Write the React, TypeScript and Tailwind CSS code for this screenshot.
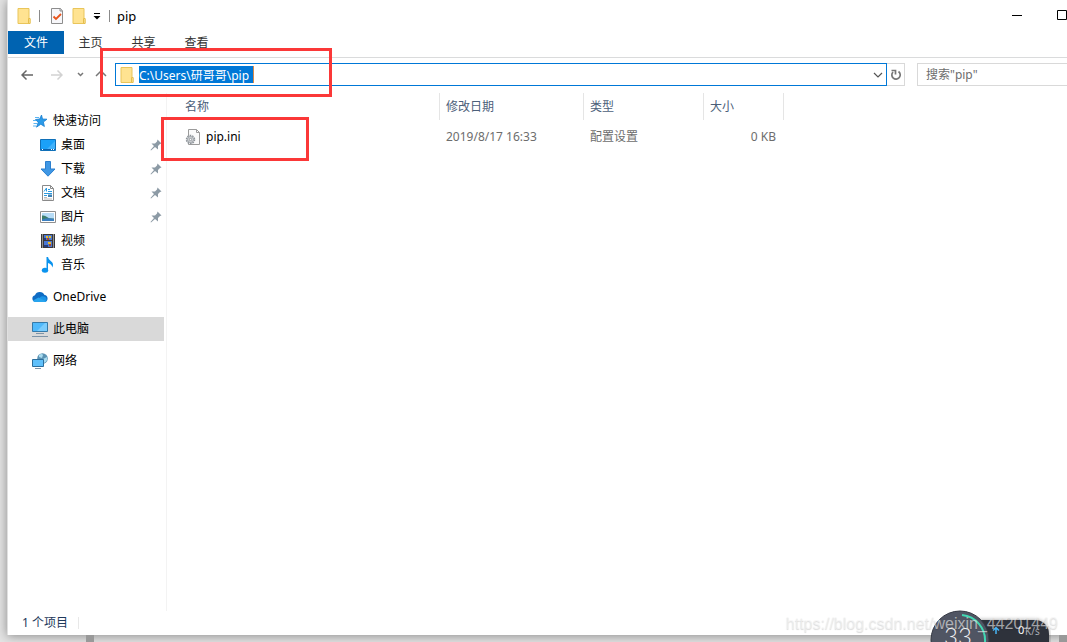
import React from 'react';

interface IconProps {
  className?: string;
}

const FolderIcon: React.FC<IconProps> = ({ className = 'w-4 h-4' }) => (
  <svg viewBox="0 0 16 16" className={className} aria-hidden="true">
    <path d="M2 .5h11v10h1v5H2z" fill="#ffe391" stroke="#e9c55a" />
    <path d="M12.500 15.500v-5h1.500v5z" fill="#fff0b5" stroke="#e6be4c" />
  </svg>
);

const PropertiesIcon = () => (
  <svg viewBox="0 0 16 16" className="w-4 h-4" aria-hidden="true">
    <path d="M2.500.5h9l2 2.500v12.500h-11z" fill="#f7f7fa" stroke="#8d8d8d" />
    <path d="M11 .5V3h2.500" fill="none" stroke="#8d8d8d" />
    <path d="M4.500 8.500l2.500 2.500 5-5" fill="none" stroke="#e8541c" strokeWidth="1.800" />
  </svg>
);

const StarIcon = () => (
  <svg viewBox="0 0 16 16" className="w-4 h-4" aria-hidden="true">
    <path
      d="M9.500 2l1 4 4.500.2-3.600 2.800 1 4.500-3.600-2.300-4.300 3 1.700-4.900L3.500 6.500l4.200-.5z"
      fill="#2a9ae8"
      stroke="#1a7fd0"
      strokeWidth=".8"
    />
    <path d="M3 4.500h4M1 7.500h3M1.500 10.500h3.500M1 13h3" stroke="#5ab4f2" />
  </svg>
);

const DesktopIcon = () => (
  <svg viewBox="0 0 16 16" className="w-4 h-4" aria-hidden="true">
    <path d="M.5 2.500h15v11H.5z" fill="#1ba1f8" stroke="#1070b8" />
    <path d="M7 12L15 4v8z" fill="#41b2fb" />
    <path d="M1 12.500h14" stroke="#0c62ad" />
    <path d="M2 12.500h1M11 12.500h1M13 12.500h1" stroke="#fff" />
  </svg>
);

const DownloadIcon = () => (
  <svg viewBox="0 0 16 16" className="w-4 h-4" aria-hidden="true">
    <path d="M5.500.5h5v7.500h4.500L8 15.200 1 8h4.500z" fill="#3f97e4" stroke="#2b7fce" />
  </svg>
);

const DocumentIcon = () => (
  <svg viewBox="0 0 16 16" className="w-4 h-4" aria-hidden="true">
    <path d="M2.500.5h8l3 3v12h-11z" fill="#fff" stroke="#8a8a8a" />
    <path d="M10.500.5v3h3" fill="none" stroke="#8a8a8a" />
    <path d="M4 6.500L6.500 3v3.500M8 4.500h2M8 6.500h4M4 8.500h8M4 10.500h3" fill="none" stroke="#2b9be0" />
    <path d="M8 9.500h4v2.500H8z" fill="#3c81b5" />
    <path d="M4 12.500h3M4 14h8" stroke="#aaa" strokeWidth=".8" />
  </svg>
);

const PictureIcon = () => (
  <svg viewBox="0 0 16 16" className="w-4 h-4" aria-hidden="true">
    <path d="M.5 2.500h15v11H.5z" fill="#fff" stroke="#8f8f8f" />
    <path d="M2 4h12v8H2z" fill="#b7dcf6" />
    <path d="M2 6.500q3-.5 5 1.500t7 1.500V12H2z" fill="#3c7d6b" />
    <path d="M2 10.500q6-2 12-.5v2H2z" fill="#3b7fc0" />
  </svg>
);

const VideoIcon = () => (
  <svg viewBox="0 0 16 16" className="w-4 h-4" aria-hidden="true">
    <path d="M1 1h14v14H1z" fill="#3a3838" />
    <path d="M2.500 1.500v13M13.500 1.500v13" stroke="#e8e8e8" strokeDasharray="1 1" />
    <path d="M4 2h8v5H4zM4 8h8v6H4z" fill="#4a78d4" />
    <path d="M6 3h2v2H6zM9 3h2v2H9zM8 9h3v2H8z" fill="#e8bd2a" />
    <path d="M7 5h2v2H7zM9 11h2v2H9z" fill="#a84630" />
    <path d="M4 5h2v2H4zM4 12h4v2H4z" fill="#243d7c" />
  </svg>
);

const MusicIcon = () => (
  <svg viewBox="0 0 16 16" className="w-4 h-4" aria-hidden="true">
    <ellipse cx="5" cy="13.300" rx="3.200" ry="2.500" fill="#0a93ee" />
    <path d="M6.500 0H8q.3 2.500 3 4.200 3.300 2.300 1.300 6.300-.3-3.500-4.300-4.500v7.500H6.500z" fill="#0a93ee" />
  </svg>
);

const CloudIcon = () => (
  <svg viewBox="0 0 16 16" className="w-4 h-4" aria-hidden="true">
    <path d="M3.500 13A3.400 3.400 0 013 6.300 5.200 5.200 0 0112.500 6 3.600 3.600 0 0113 13z" fill="#0f6cc4" />
    <path d="M3 13l6-5.500q2-.8 4 .2A3 3 0 0113 13z" fill="#1b94e6" />
    <path d="M1 11.500L6.500 8.500l8 4-1.500.5H3.500Q1.500 13 1 11.500z" fill="#28a4ee" />
  </svg>
);

const ComputerIcon = () => (
  <svg viewBox="0 0 16 16" className="w-4 h-4" aria-hidden="true">
    <path d="M.5 1.500h15v9H.5z" fill="#4fb9fb" stroke="#3579a8" />
    <path d="M5 10L13 2h2v8z" fill="#7accfd" />
    <path d="M4 12.500h8M0 15.500h16" stroke="#7d94a8" />
  </svg>
);

const NetworkIcon = () => (
  <svg viewBox="0 0 16 16" className="w-4 h-4" aria-hidden="true">
    <circle cx="10.500" cy="5.500" r="5.300" fill="#5b93b4" />
    <path d="M7 2q3-2 4 0l-1 3-3-1zM11 6l4-2q1 4-3 6z" fill="#a9dcf0" />
    <path d="M.5 6.500h11v7H.5z" fill="#5fc0fb" stroke="#2c6e9c" />
    <path d="M3 15.500h6" stroke="#7d94a8" />
  </svg>
);

const PinIcon = () => (
  <svg viewBox="0 0 12 12" className="w-3 h-3" aria-hidden="true">
    <path d="M7.500.5l4 4-1.500.5-2 2v3.500L5 8 1 11.500.5 11 4 7 1.500 4.500H5l2-2z" fill="#8c9aa5" />
  </svg>
);

const IniIcon = () => (
  <svg viewBox="0 0 16 16" className="w-4 h-4" aria-hidden="true">
    <path d="M3.500.5h8l3 3v12h-11z" fill="#fafafa" stroke="#9b9b9b" />
    <path d="M11.500.5v3h3" fill="none" stroke="#9b9b9b" />
    <circle cx="5.500" cy="10.500" r="4" fill="#e4e6e8" stroke="#8d9398" strokeWidth="1.500" strokeDasharray="1.600 .9" />
    <circle cx="5.500" cy="10.500" r="3" fill="#d6d9dc" stroke="#9ba0a5" />
    <circle cx="5.500" cy="10.500" r="1.200" fill="#fff" stroke="#7e8388" strokeWidth=".8" />
  </svg>
);

interface NavItem {
  label: string;
  icon: React.ReactNode;
  pinned?: boolean;
}

const quickAccess: NavItem[] = [
  { label: '桌面', icon: <DesktopIcon />, pinned: true },
  { label: '下载', icon: <DownloadIcon />, pinned: true },
  { label: '文档', icon: <DocumentIcon />, pinned: true },
  { label: '图片', icon: <PictureIcon />, pinned: true },
  { label: '视频', icon: <VideoIcon /> },
  { label: '音乐', icon: <MusicIcon /> },
];

const TitleBar = () => (
  <header className="flex h-[31px] items-center pl-2">
    <FolderIcon />
    <span className="ml-[7px] h-3 w-px bg-[#8a8a8a]" />
    <button type="button" aria-label="属性" className="ml-[9px]">
      <PropertiesIcon />
    </button>
    <button type="button" aria-label="新建文件夹" className="ml-[6px]">
      <FolderIcon />
    </button>
    <button type="button" aria-label="自定义快速访问工具栏" className="ml-[6px]">
      <svg viewBox="0 0 8 8" className="h-2 w-2">
        <path d="M1 1.500h6" stroke="#000" />
        <path d="M.5 4h7L4 7.500z" fill="#000" />
      </svg>
    </button>
    <span className="ml-2 h-3 w-px bg-[#8a8a8a]" />
    <h1 className="ml-[7px] text-[13px]">pip</h1>
    <div className="ml-auto flex items-center">
      <button type="button" aria-label="最小化" className="mr-[34px]">
        <svg viewBox="0 0 11 11" className="h-[11px] w-[11px]">
          <path d="M0 5.500h10" stroke="#000" />
        </svg>
      </button>
      <button type="button" aria-label="最大化" className="w-[10px] overflow-hidden">
        <svg viewBox="0 0 11 11" className="h-[11px] w-[11px]">
          <path d="M.5.5h9v9h-9z" fill="none" stroke="#000" />
        </svg>
      </button>
    </div>
  </header>
);

const RibbonTabs = () => (
  <div className="flex h-[27px] items-start border-b border-[#dadbdc] text-[#333]">
    <button type="button" className="h-[23px] w-14 bg-[#0063b1] text-white">
      文件
    </button>
    <button type="button" className="h-[23px] w-[53px]">
      主页
    </button>
    <button type="button" className="h-[23px] w-[53px]">
      共享
    </button>
    <button type="button" className="h-[23px] w-[53px]">
      查看
    </button>
  </div>
);

const AddressBar = () => (
  <div className="flex h-[35px] items-center pb-[2px] text-[#5f5f5f]">
    <button type="button" aria-label="后退" className="ml-[13px]">
      <svg viewBox="0 0 12 12" className="h-3 w-3" fill="none" stroke="#666" strokeWidth="1.500">
        <path d="M12 6H1M5.500 1.500L1 6l4.500 4.500" />
      </svg>
    </button>
    <button type="button" aria-label="前进" className="ml-[18px]">
      <svg viewBox="0 0 12 12" className="h-3 w-3" fill="none" stroke="#d2d2d2" strokeWidth="1.500">
        <path d="M0 6h11M6.500 1.500L11 6l-4.500 4.500" />
      </svg>
    </button>
    <button type="button" aria-label="最近浏览的位置" className="ml-[14px]">
      <svg viewBox="0 0 8 8" className="h-2 w-2" fill="none" stroke="#777" strokeWidth="1.500">
        <path d="M1 2l2.500 2.500L6 2" />
      </svg>
    </button>
    <button type="button" aria-label="上移" className="ml-[10px]">
      <svg viewBox="0 0 12 12" className="h-3 w-3" fill="none" stroke="#777" strokeWidth="1.500">
        <path d="M1 7l5-5 5 5" />
      </svg>
    </button>
    <div className="ml-2 flex h-[23px] flex-1 items-center border border-[#0078d7] pl-[3px] pr-[3px]">
      <FolderIcon />
      <input
        aria-label="地址"
        defaultValue="C:\Users\研哥哥\pip"
        className="ml-1 h-[17px] border-r border-[#d98a4a] bg-[#0078d7] pr-1 text-[12px] text-white outline-none [field-sizing:content]"
      />
      <button type="button" aria-label="以前的位置" className="ml-auto">
        <svg viewBox="0 0 10 10" className="h-[10px] w-[10px]" fill="none" stroke="#555" strokeWidth="1.200">
          <path d="M1 3l4 4 4-4" />
        </svg>
      </button>
    </div>
    <button
      type="button"
      aria-label="刷新"
      className="flex h-[23px] w-[18px] items-center justify-center border border-l-0 border-[#d9d9d9]"
    >
      <svg viewBox="0 0 12 12" className="h-3 w-3" fill="none" stroke="#777" strokeWidth="1.700">
        <path d="M8.500 2.500a4.200 4.200 0 11-5.500.5M1.500 1.500h4v4" />
      </svg>
    </button>
    <input
      type="search"
      aria-label="搜索"
      placeholder={'搜索"pip"'}
      className="ml-3 h-[23px] w-[150px] border border-r-0 border-[#d9d9d9] pl-2 text-[12px] outline-none placeholder:text-[#6d6d6d]"
    />
  </div>
);

const Sidebar = () => (
  <nav className="w-[159px] shrink-0 border-r border-[#f3f3f3] pt-4 text-black">
    <a href="#quick" className="flex h-6 items-center gap-[5px] pl-6">
      <StarIcon />
      快速访问
    </a>
    {quickAccess.map((item) => (
      <a key={item.label} href="#folder" className="flex h-6 items-center gap-[5px] pl-8 pr-1">
        {item.icon}
        {item.label}
        {item.pinned && (
          <span className="ml-auto">
            <PinIcon />
          </span>
        )}
      </a>
    ))}
    <a href="#onedrive" className="mt-2 flex h-6 items-center gap-[5px] pl-6">
      <CloudIcon />
      OneDrive
    </a>
    <a href="#computer" className="mr-[2px] mt-2 flex h-6 items-center gap-[5px] bg-[#d9d9d9] pl-6">
      <ComputerIcon />
      此电脑
    </a>
    <a href="#network" className="mt-2 flex h-6 items-center gap-[5px] pl-6">
      <NetworkIcon />
      网络
    </a>
  </nav>
);

const FileList = () => (
  <main className="flex-1">
    <table className="table-fixed border-separate border-spacing-0 text-left">
      <thead>
        <tr className="h-[27px] text-[#4c607a]">
          <th className="relative w-[273px] border-r border-[#e5e5e5] pl-[18px] font-normal">
            名称
            <svg viewBox="0 0 8 4" className="absolute left-[138px] top-0 h-1 w-2" fill="none" stroke="#aaa">
              <path d="M1 4l3-3 3 3" />
            </svg>
          </th>
          <th className="w-36 border-r border-[#e5e5e5] pl-[6px] font-normal">修改日期</th>
          <th className="w-[120px] border-r border-[#e5e5e5] pl-[6px] font-normal">类型</th>
          <th className="w-20 border-r border-[#e5e5e5] pl-[6px] font-normal">大小</th>
        </tr>
      </thead>
      <tbody>
        <tr className="h-[34px] text-[#6d6d6d]">
          <td className="pl-[18px]">
            <span className="flex items-center gap-[5px] text-black">
              <IniIcon />
              pip.ini
            </span>
          </td>
          <td className="pl-[6px]">2019/8/17 16:33</td>
          <td className="pl-[6px]">配置设置</td>
          <td className="pr-2 text-right">0 KB</td>
        </tr>
      </tbody>
    </table>
  </main>
);

// Floating memory / network speed widget in the screen corner
const SpeedWidget = () => (
  <div className="absolute bottom-0 right-4 h-9 w-[121px] overflow-hidden">
    <div className="absolute left-8 top-[14px] h-10 w-[87px] rounded-[14px] bg-[#2e323b] shadow-[0_0_4px_rgba(0,0,0,0.4)]" />
    <svg viewBox="0 0 121 36" className="absolute inset-0 h-9 w-[121px]">
      <circle cx="30" cy="34" r="29" fill="#505563" stroke="#343843" />
      <path d="M32 9a25.500 25.500 0 0123 27" fill="none" stroke="#42d9b4" strokeWidth="2" />
      <path d="M66 28v-6M63 24.500l3-3 3 3" fill="none" stroke="#48b5f5" strokeWidth="1.500" />
    </svg>
    <span className="absolute left-[14px] top-[16px] font-['Lato',sans-serif] text-[24px] font-light leading-7 text-[#f2f2f5]">
      33
    </span>
    <span className="absolute left-[88px] top-4 text-[11px] leading-4 text-white">0</span>
    <span className="absolute left-[95px] top-[17px] text-[10px] leading-4 text-[#a8abb3]">K/s</span>
  </div>
);

const App: React.FC = () => {
  return (
    <div className="relative flex h-screen flex-col overflow-hidden bg-[#e4e4e4] pl-[7px] font-['Noto_Sans','Noto_Sans_CJK_SC',sans-serif] text-[12px] leading-4 text-black">
      <div className="flex min-h-0 flex-1 flex-col border-l border-[#e0e0e0] bg-white shadow-[0_1px_10px_rgba(0,0,0,0.4)]">
        <TitleBar />
        <RibbonTabs />
        <AddressBar />
        <div className="flex min-h-0 flex-1">
          <Sidebar />
          <FileList />
        </div>
        <footer className="flex h-6 items-center pl-[14px] text-[#1e395b]">
          1 个项目
          <span className="ml-[10px] h-3 w-px bg-[#e8e8e8]" />
        </footer>
      </div>
      <div className="flex h-[7px] shrink-0 justify-between">
        <span className="ml-[79px] w-2 bg-[#999]" />
        <span className="w-2 bg-[#999]" />
      </div>

      {/* Highlight frames over the address and the file */}
      <div className="pointer-events-none absolute left-[100px] top-12 h-[49px] w-[232px] border-[3px] border-[#fb3838]" />
      <div className="pointer-events-none absolute left-[161px] top-[117px] h-11 w-[148px] border-[3px] border-[#fb3838]" />

      <SpeedWidget />
      <p className="pointer-events-none absolute bottom-2 right-[9px] font-['Liberation_Sans',sans-serif] text-[16px] leading-5 text-[#f4f4f4]/60 [text-shadow:0_1px_1px_rgba(0,0,0,0.15)]">
        https://blog.csdn.net/weixin_44201449
      </p>
    </div>
  );
};

export default App;
